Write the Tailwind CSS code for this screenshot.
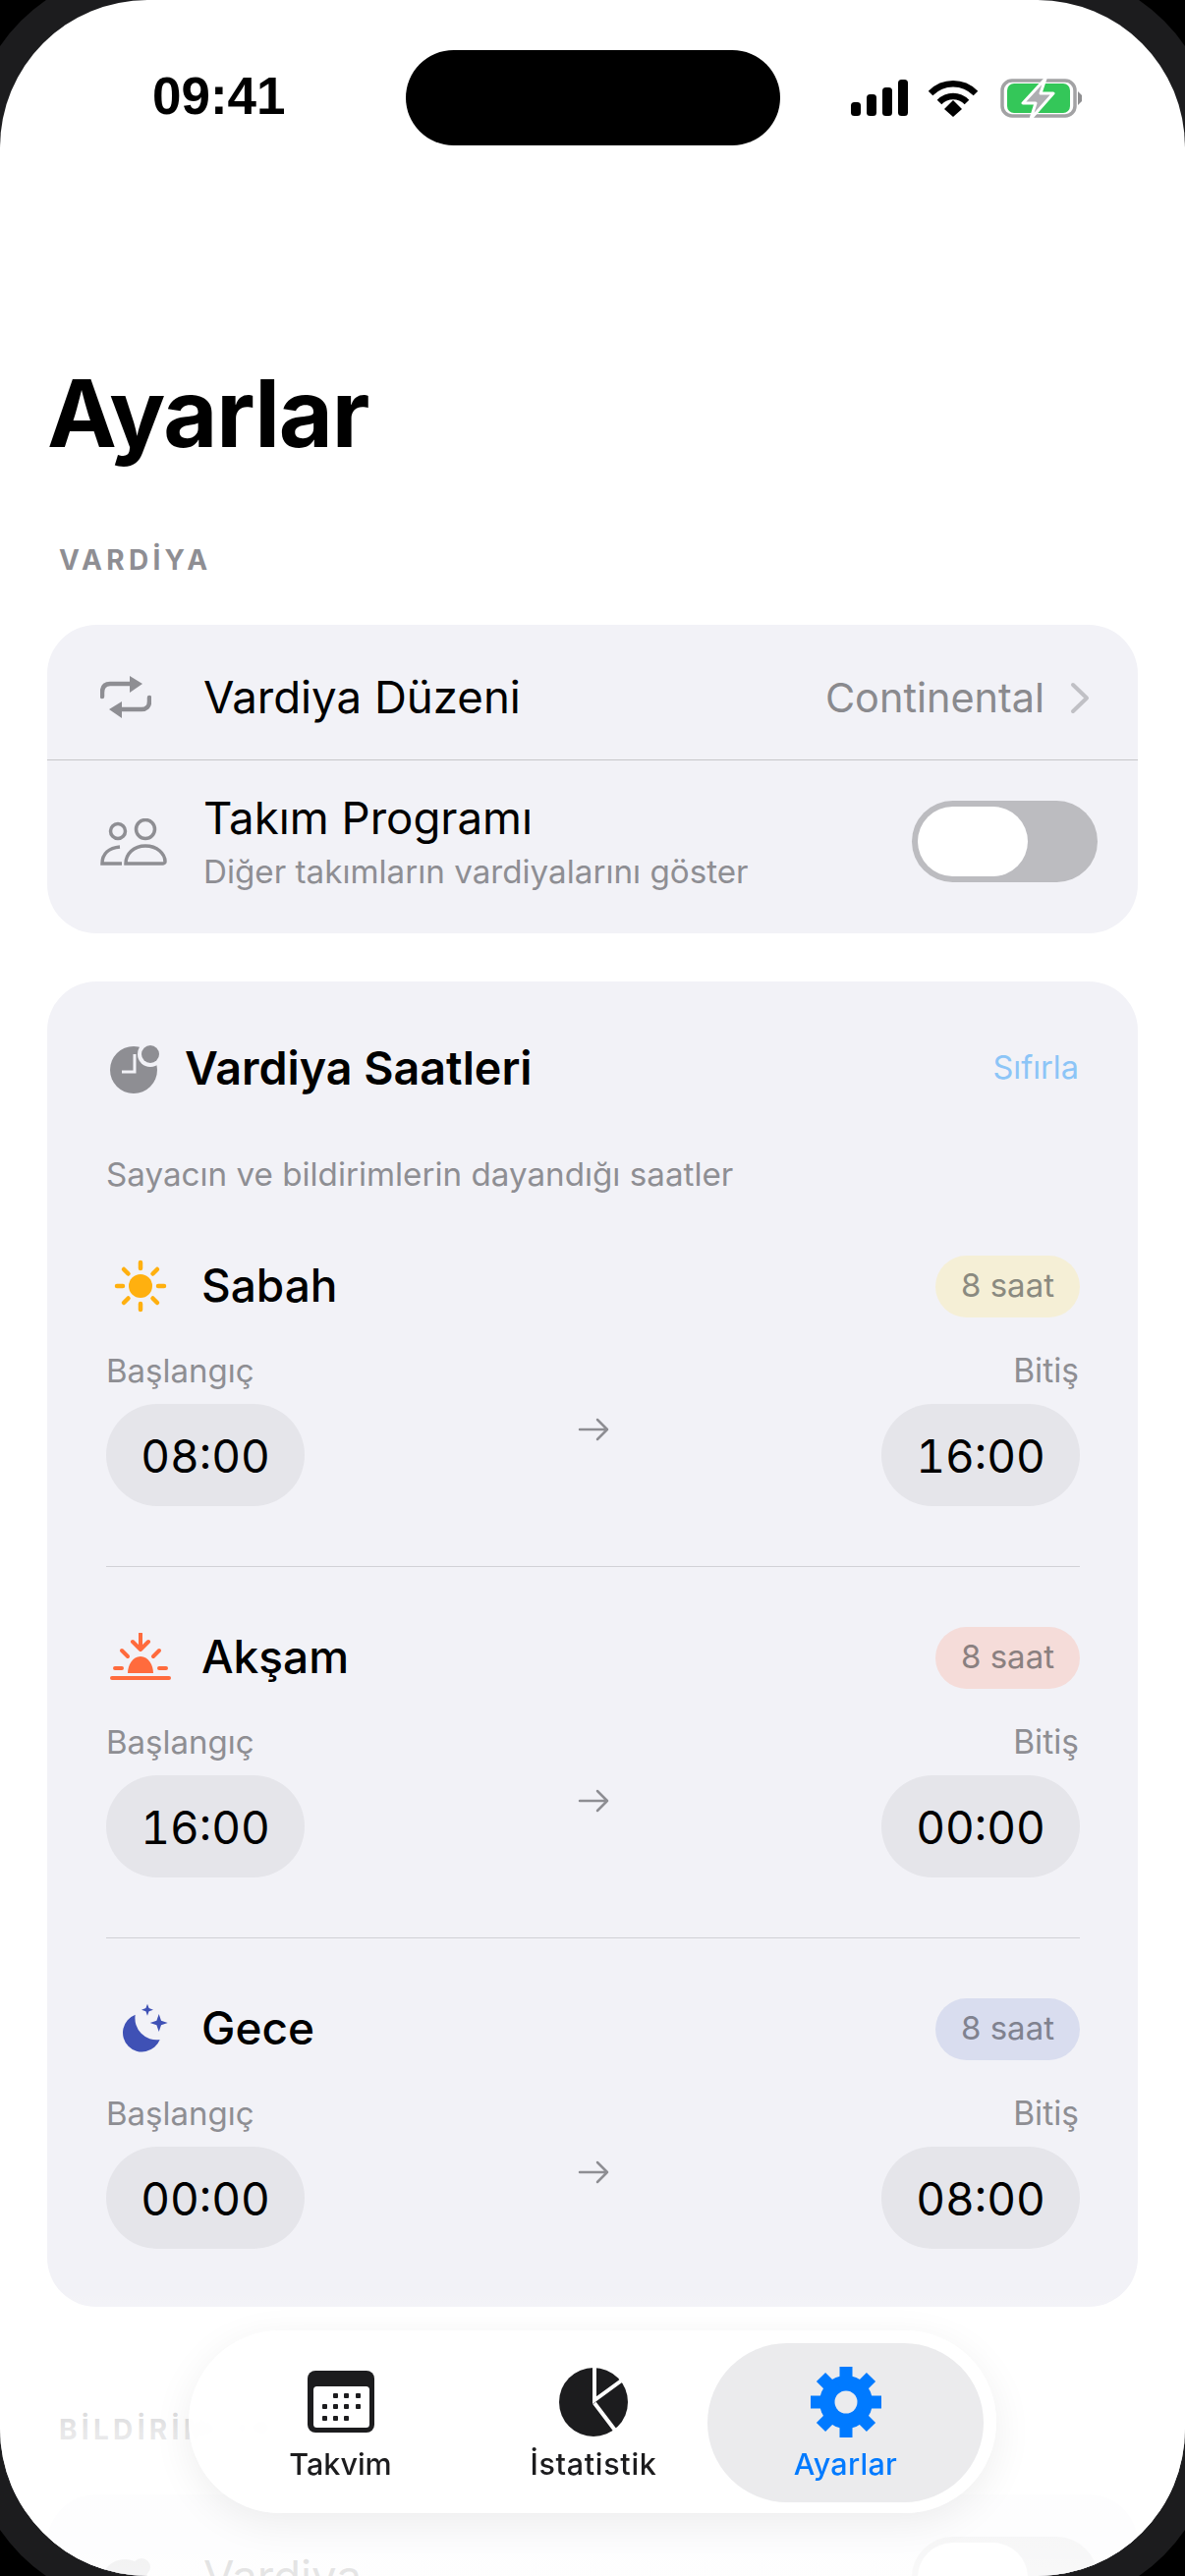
<!DOCTYPE html>
<html lang="tr">
<head>
    <meta charset="UTF-8">
    <meta name="viewport" content="width=device-width, initial-scale=1.0">
    <title>Ayarlar</title>
    <script src="https://cdn.jsdelivr.net/npm/@tailwindcss/browser@4"></script>
</head>
<body class="bg-black">
    <div class="relative w-[1206px] h-[2622px] overflow-hidden bg-black font-['Inter',sans-serif] text-black">
        <!-- device bezel -->
        <div class="absolute -inset-[32px] rounded-[182px] bg-[#1c1c1e]"></div>

        <div class="absolute inset-0 rounded-[150px] bg-white overflow-hidden">
            <!-- status bar -->
            <div class="flex items-center h-[97px] mt-[51px]">
                <div class="w-[413px] pl-[155px] font-['Liberation_Sans',sans-serif] font-bold text-[53px] leading-[60px] pb-[3px]">09:41</div>
                <div class="w-[381px] h-[97px] rounded-full bg-black"></div>
                <div class="pl-[71px] flex items-center">
                    <svg class="w-[60px] h-[38px]" viewBox="0 0 60 38" fill="#000">
                        <rect x="1" y="23" width="10" height="14" rx="3.5"/>
                        <rect x="17" y="15" width="10" height="22" rx="3.5"/>
                        <rect x="33" y="8" width="10" height="29" rx="3.5"/>
                        <rect x="49" y="0" width="10" height="37" rx="3.5"/>
                    </svg>
                    <svg class="w-[50px] h-[38px] ml-[20px]" viewBox="0 0 50 38" fill="none" stroke="#000" stroke-width="6.5">
                        <path d="M2 14C15 1 35 1 48 14"/>
                        <path d="M11 23C19 15 31 15 39 23"/>
                        <path d="M16 30L25 21L34 30L25 38Z" fill="#000" stroke="none"/>
                    </svg>
                    <svg class="w-[84px] h-[42px] ml-[23px]" viewBox="0 0 84 42" fill="none">
                        <rect x="2" y="3" width="74" height="36" rx="10" stroke="#a2a2a4" stroke-width="3.5"/>
                        <rect x="7" y="6" width="64" height="30" rx="7" fill="#34c759"/>
                        <path d="M79 14L83 18V24L79 28Z" fill="#8e8e90"/>
                        <path d="M46 1L23 26H36L31 42L54 16H41Z" fill="#aeaeb2" stroke="#fff" stroke-width="3" stroke-linejoin="round"/>
                    </svg>
                </div>
            </div>

            <h1 class="mt-[218px] pl-[48px] text-[95px] leading-[110px] font-bold tracking-[-1.2px]">Ayarlar</h1>

            <div class="mt-[79px] pl-[60px] text-[28px] leading-[30px] font-bold tracking-[4.3px] text-[#8e8e93]">VARDİYA</div>

            <!-- schedule card -->
            <div class="mt-[51px] mx-[48px] h-[314px] rounded-[50px] bg-[#f2f2f7] flex flex-col">
                <div class="h-[137px] flex items-center pl-[54px] pr-[49px] pt-[11px]">
                    <div class="w-[105px] shrink-0">
                        <svg class="w-[52px] h-[44px]" viewBox="0 0 52 44" fill="none" stroke="#8e8e93" stroke-width="4.5" stroke-linecap="round">
                            <path d="M2 21V17C2 11 5 8 10 8H33"/>
                            <path d="M30 0L43 8L30 17Z" fill="#8e8e93" stroke="none"/>
                            <path d="M50 22V26C50 31 47 34 42 34H19"/>
                            <path d="M22 26L9 34L22 43Z" fill="#8e8e93" stroke="none"/>
                        </svg>
                    </div>
                    <span class="text-[45.6px] leading-[54px]">Vardiya Düzeni</span>
                    <span class="ml-auto text-[41.4px] leading-[54px] text-[#8a8a8e]">Continental</span>
                    <svg class="w-[20px] h-[33px] ml-[26px]" viewBox="0 0 20 33" fill="none" stroke="#c0c0c5" stroke-width="4" stroke-linecap="round" stroke-linejoin="round">
                        <path d="M3 3L17 16.5L3 30"/>
                    </svg>
                </div>
                <div class="h-[1px] bg-[#c6c6c8]"></div>
                <div class="flex-1 flex items-center pl-[54px] pr-[41px] pb-[11px]">
                    <div class="w-[105px] shrink-0">
                        <svg class="w-[70px] h-[48px]" viewBox="0 0 70 48" fill="none" stroke="#8e8e93" stroke-width="3.5">
                            <circle cx="18" cy="13" r="7.5"/>
                            <circle cx="46" cy="11" r="9.5"/>
                            <path d="M22 46H2C2 36 9 30 20 29"/>
                            <path d="M26 46C26 36 34 28 46 28C58 28 66 36 66 44C66 45 65 46 64 46Z"/>
                        </svg>
                    </div>
                    <div class="flex flex-col">
                        <span class="text-[45.6px] leading-[54px]">Takım Programı</span>
                        <span class="mt-[7px] text-[33.2px] leading-[40px] text-[#8e8e93]">Diğer takımların vardiyalarını göster</span>
                    </div>
                    <div class="ml-auto w-[189px] h-[83px] p-[6px] rounded-full bg-[#bcbcc0]">
                        <div class="w-[112px] h-full rounded-full bg-white"></div>
                    </div>
                </div>
            </div>

            <!-- shift hours card -->
            <div class="mt-[49px] mx-[48px] rounded-[50px] bg-[#f2f2f7] pt-[60px] pb-[59px] pl-[60px] pr-[59px]">
                <div class="h-[58px] flex items-center">
                    <svg class="w-[54px] h-[52px] ml-[3px] mr-[23px] shrink-0" viewBox="0 0 54 52">
                        <circle cx="25" cy="27" r="24" fill="#8e8e93"/>
                        <circle cx="42" cy="11" r="13" fill="#f2f2f7"/>
                        <circle cx="42" cy="11" r="9" fill="#8e8e93"/>
                        <path d="M26 11V29H13" fill="none" stroke="#f2f2f7" stroke-width="3"/>
                    </svg>
                    <span class="text-[46.6px] leading-[58px] font-semibold pb-[2px]">Vardiya Saatleri</span>
                    <span class="ml-auto pr-[1px] text-[32.5px] leading-[40px] text-[#8cc5f7] pb-[2px]">Sıfırla</span>
                </div>
                <div class="mt-[58px] text-[33.2px] leading-[40px] text-[#8e8e93]">Sayacın ve bildirimlerin dayandığı saatler</div>

                <!-- morning -->
                <div class="mt-[62px] h-[64px] flex items-center">
                    <div class="w-[97px] shrink-0">
                        <svg class="w-[54px] h-[54px] ml-[8px]" viewBox="0 0 54 54" fill="#ffb00f" stroke="#ffb00f" stroke-width="4.5" stroke-linecap="round">
                            <circle cx="27" cy="27" r="12" stroke="none"/>
                            <path d="M27 3V9M27 45V51M3 27H9M45 27H51M10 10L14.5 14.5M39.5 39.5L44 44M10 44L14.5 39.5M39.5 14.5L44 10"/>
                        </svg>
                    </div>
                    <span class="text-[46px] leading-[54px] font-medium pb-[2px]">Sabah</span>
                    <span class="ml-auto w-[147px] h-[63px] rounded-full bg-[#f5efd6] flex items-center justify-center text-[33px] text-[#8a8a80]">8 saat</span>
                </div>
                <div class="mt-[34px] flex items-center justify-between">
                    <div class="flex flex-col">
                        <span class="text-[33px] leading-[40px] text-[#8e8e93]">Başlangıç</span>
                        <span class="mt-[14px] w-[202px] h-[104px] pt-[2px] rounded-full bg-[#e5e5ea] flex items-center justify-center text-[46px] tabular-nums">08:00</span>
                    </div>
                    <svg class="w-[32px] h-[24px] mt-[1px]" viewBox="0 0 32 24" fill="none" stroke="#8e8e93" stroke-width="2.5" stroke-linecap="round" stroke-linejoin="round">
                        <path d="M2 12H30M20 2L30 12L20 22"/>
                    </svg>
                    <div class="flex flex-col items-end">
                        <span class="pr-[1px] text-[33.5px] leading-[40px] text-[#8e8e93]">Bitiş</span>
                        <span class="mt-[14px] w-[202px] h-[104px] pt-[2px] rounded-full bg-[#e5e5ea] flex items-center justify-center text-[46px] tabular-nums">16:00</span>
                    </div>
                </div>
                <div class="mt-[61px] h-[1px] bg-[#d1d1d6]"></div>

                <!-- evening -->
                <div class="mt-[60px] h-[64px] flex items-center">
                    <div class="w-[97px] shrink-0">
                        <svg class="w-[62px] h-[48px] ml-[4px] mb-[2px]" viewBox="0 0 62 48" fill="none" stroke="#ff6b3d" stroke-width="4" stroke-linecap="round" stroke-linejoin="round">
                            <path d="M2 46H60"/>
                            <path d="M18 41C18 33 23 24 31 24C39 24 44 33 44 41Z" fill="#ff6b3d" stroke="none"/>
                            <path d="M5 36H12M50 36H57M12 18L18 24M50 18L44 24"/>
                            <path d="M31 1V17M23 9L31 17L39 9"/>
                        </svg>
                    </div>
                    <span class="text-[46px] leading-[54px] font-medium pb-[2px]">Akşam</span>
                    <span class="ml-auto w-[147px] h-[63px] rounded-full bg-[#f5dcd9] flex items-center justify-center text-[33px] text-[#8a8080]">8 saat</span>
                </div>
                <div class="mt-[34px] flex items-center justify-between">
                    <div class="flex flex-col">
                        <span class="text-[33px] leading-[40px] text-[#8e8e93]">Başlangıç</span>
                        <span class="mt-[14px] w-[202px] h-[104px] pt-[2px] rounded-full bg-[#e5e5ea] flex items-center justify-center text-[46px] tabular-nums">16:00</span>
                    </div>
                    <svg class="w-[32px] h-[24px] mt-[1px]" viewBox="0 0 32 24" fill="none" stroke="#8e8e93" stroke-width="2.5" stroke-linecap="round" stroke-linejoin="round">
                        <path d="M2 12H30M20 2L30 12L20 22"/>
                    </svg>
                    <div class="flex flex-col items-end">
                        <span class="pr-[1px] text-[33.5px] leading-[40px] text-[#8e8e93]">Bitiş</span>
                        <span class="mt-[14px] w-[202px] h-[104px] pt-[2px] rounded-full bg-[#e5e5ea] flex items-center justify-center text-[46px] tabular-nums">00:00</span>
                    </div>
                </div>
                <div class="mt-[61px] h-[1px] bg-[#d1d1d6]"></div>

                <!-- night -->
                <div class="mt-[60px] h-[64px] flex items-center">
                    <div class="w-[97px] shrink-0">
                        <svg class="w-[54px] h-[54px] ml-[15px]" viewBox="0 0 54 54" fill="#3f51b5">
                            <path d="M14.7 12.7A19.5 19.5 0 1 0 39.7 38A22 22 0 0 1 14.7 12.7Z"/>
                            <path d="M27 1.7L28.6 6.1L33 7.7L28.6 9.3L27 13.7L25.4 9.3L21 7.7L25.4 6.1Z"/>
                            <path d="M38.7 12L41 18.7L47.7 21L41 23.3L38.7 30L36.4 23.3L29.7 21L36.4 18.7Z"/>
                        </svg>
                    </div>
                    <span class="text-[46px] leading-[54px] font-medium pb-[2px]">Gece</span>
                    <span class="ml-auto w-[147px] h-[63px] rounded-full bg-[#d9ddef] flex items-center justify-center text-[33px] text-[#80828f]">8 saat</span>
                </div>
                <div class="mt-[34px] flex items-center justify-between">
                    <div class="flex flex-col">
                        <span class="text-[33px] leading-[40px] text-[#8e8e93]">Başlangıç</span>
                        <span class="mt-[14px] w-[202px] h-[104px] pt-[2px] rounded-full bg-[#e5e5ea] flex items-center justify-center text-[46px] tabular-nums">00:00</span>
                    </div>
                    <svg class="w-[32px] h-[24px] mt-[1px]" viewBox="0 0 32 24" fill="none" stroke="#8e8e93" stroke-width="2.5" stroke-linecap="round" stroke-linejoin="round">
                        <path d="M2 12H30M20 2L30 12L20 22"/>
                    </svg>
                    <div class="flex flex-col items-end">
                        <span class="pr-[1px] text-[33.5px] leading-[40px] text-[#8e8e93]">Bitiş</span>
                        <span class="mt-[14px] w-[202px] h-[104px] pt-[2px] rounded-full bg-[#e5e5ea] flex items-center justify-center text-[46px] tabular-nums">08:00</span>
                    </div>
                </div>
            </div>

            <div class="mt-[110px] pl-[60px] text-[28px] leading-[30px] font-bold tracking-[4.3px] text-[#8e8e93]">BİLDİRİMLER</div>

            <!-- notifications card, runs under the tab bar -->
            <div class="mt-[51px] mx-[48px] h-[200px] rounded-[50px] bg-[#f2f2f7] flex items-start pl-[54px] pr-[41px] pt-[43px]">
                <div class="w-[105px] shrink-0 pt-[20px]">
                    <svg class="w-[54px] h-[52px]" viewBox="0 0 54 52">
                        <circle cx="25" cy="27" r="24" fill="#8e8e93"/>
                        <circle cx="42" cy="11" r="9" fill="#8e8e93"/>
                    </svg>
                </div>
                <span class="pt-[14px] text-[45.6px] leading-[54px]">Vardiya</span>
                <div class="ml-auto w-[189px] h-[83px] p-[6px] rounded-full bg-[#bcbcc0]">
                    <div class="w-[112px] h-full rounded-full bg-white"></div>
                </div>
            </div>

            <!-- fade under the tab bar -->
            <div class="absolute left-0 right-0 bottom-0 h-[292px] bg-linear-to-b from-white/0 via-white/80 to-white/90"></div>

            <!-- tab bar -->
            <nav class="absolute left-[192px] top-[2372px] w-[822px] h-[186px] p-[13px] flex rounded-[93px] bg-white/90 backdrop-blur-sm shadow-[0_10px_40px_rgba(0,0,0,0.07)]">
                <div class="w-[283px] h-[162px] pt-[24px] flex flex-col items-center">
                    <svg class="w-[70px] h-[72px]" viewBox="0 0 70 72">
                        <rect x="1" y="4" width="68" height="63" rx="8" fill="#1c1c1e"/>
                        <rect x="7" y="20" width="57" height="42" rx="3.5" fill="#fff"/>
                        <g fill="#1c1c1e">
                            <rect x="27" y="27" width="5" height="5" rx="1"/><rect x="38" y="27" width="5" height="5" rx="1"/><rect x="50" y="27" width="5" height="5" rx="1"/>
                            <rect x="16" y="38" width="5" height="5" rx="1"/><rect x="27" y="38" width="5" height="5" rx="1"/><rect x="38" y="38" width="5" height="5" rx="1"/><rect x="50" y="38" width="5" height="5" rx="1"/>
                            <rect x="16" y="50" width="5" height="5" rx="1"/><rect x="27" y="50" width="5" height="5" rx="1"/><rect x="38" y="50" width="5" height="5" rx="1"/>
                        </g>
                    </svg>
                    <span class="mt-[7px] text-[30.5px] leading-[40px] font-medium text-[#1c1c1e]">Takvim</span>
                </div>
                <div class="w-[232px] h-[162px] pt-[24px] flex flex-col items-center">
                    <svg class="w-[72px] h-[72px]" viewBox="0 0 72 72">
                        <circle cx="36" cy="36" r="35" fill="#1c1c1e"/>
                        <path d="M37 0V34L70 10M37 37L62 70" fill="none" stroke="#fff" stroke-width="4"/>
                    </svg>
                    <span class="mt-[7px] text-[30.5px] leading-[40px] tracking-[0.7px] font-medium text-[#1c1c1e]">İstatistik</span>
                </div>
                <div class="w-[281px] h-[162px] pt-[24px] flex flex-col items-center rounded-[81px] bg-[#ebebed]">
                    <svg class="w-[72px] h-[72px]" viewBox="0 0 72 72">
                        <circle cx="36" cy="36" r="27" fill="#007aff"/>
                        <path d="M36 0V72M0 36H72M10.5 10.5L61.5 61.5M61.5 10.5L10.5 61.5" stroke="#007aff" stroke-width="13"/>
                        <circle cx="36" cy="36" r="11.5" fill="#ebebed"/>
                    </svg>
                    <span class="mt-[7px] text-[30.5px] leading-[40px] tracking-[0.3px] font-medium text-[#007aff]">Ayarlar</span>
                </div>
            </nav>
        </div>
    </div>
</body>
</html>
